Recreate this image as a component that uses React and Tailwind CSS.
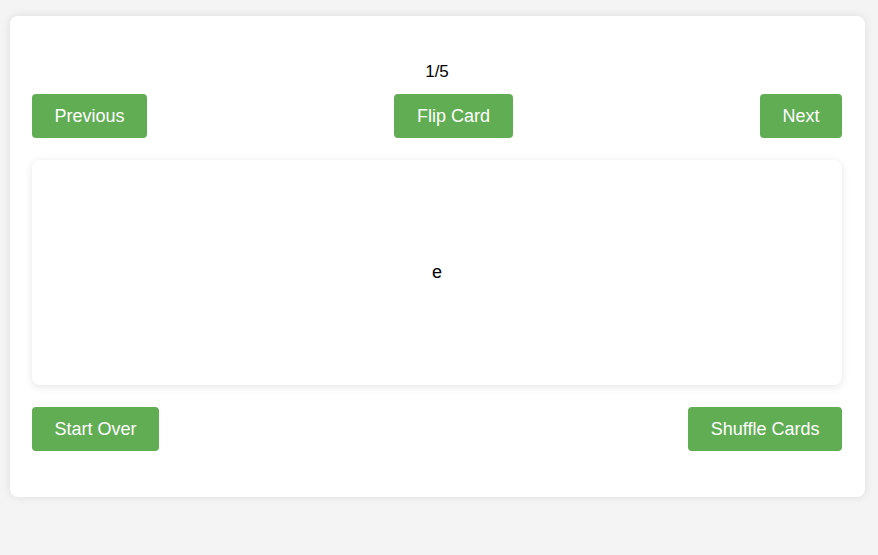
export default function App() {
  const btn = "bg-[#61ad54] text-white text-[18px] leading-[21px] px-[22.5px] py-[11.5px] rounded-[4px]";
  return (
    <div className="min-h-[555px] bg-[#f4f4f4] pt-[16px] pl-[10px]" style={{ fontFamily: '"Liberation Sans", Arial, sans-serif' }}>
      <div className="w-[855px] bg-white rounded-[8px] shadow-[0_0_10px_rgba(0,0,0,0.1)] pl-[22px] pr-[23px] pt-[46px] pb-[46px] flex flex-col">
        <div className="text-center text-[17px] leading-[19px] text-black">1/5</div>
        <div className="flex justify-between items-center mt-[13px]">
          <button className={btn}>Previous</button>
          <button className={btn}>Flip Card</button>
          <button className={btn}>Next</button>
        </div>
        <div className="mt-[22px] h-[225px] rounded-[8px] bg-white shadow-[0_2px_8px_rgba(0,0,0,0.1)] flex items-center justify-center text-[18px] text-black">
          e
        </div>
        <div className="flex justify-between items-center mt-[22px]">
          <button className={btn}>Start Over</button>
          <button className={btn}>Shuffle Cards</button>
        </div>
      </div>
    </div>
  );
}
